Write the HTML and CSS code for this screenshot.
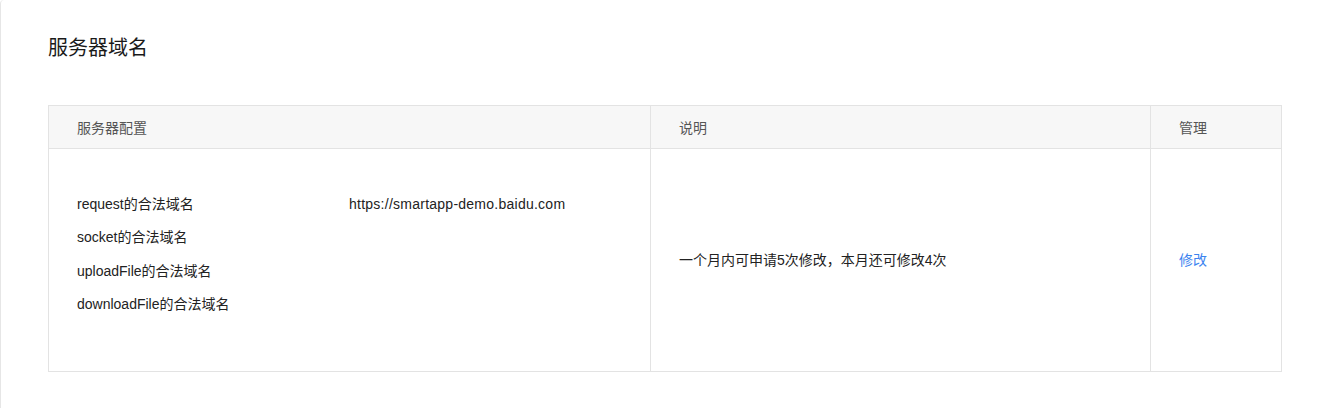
FILE: index.html
```html
<!DOCTYPE html>
<html lang="zh-CN">
<head>
<meta charset="utf-8">
<title>服务器域名</title>
<link rel="stylesheet" href="styles.css">
</head>
<body>
<div class="panel">
  <h1 class="title">服务器域名</h1>
  <table class="domain-table">
    <thead>
      <tr>
        <th class="col-config">服务器配置</th>
        <th class="col-desc">说明</th>
        <th class="col-manage">管理</th>
      </tr>
    </thead>
    <tbody>
      <tr>
        <td class="cell-config">
          <ul class="domain-list">
            <li class="domain-item"><span class="domain-label">request的合法域名</span><span class="domain-value">https://smartapp-demo.baidu.com</span></li>
            <li class="domain-item"><span class="domain-label">socket的合法域名</span><span class="domain-value"></span></li>
            <li class="domain-item"><span class="domain-label">uploadFile的合法域名</span><span class="domain-value"></span></li>
            <li class="domain-item"><span class="domain-label">downloadFile的合法域名</span><span class="domain-value"></span></li>
          </ul>
        </td>
        <td class="cell-desc">一个月内可申请5次修改，本月还可修改4次</td>
        <td class="cell-manage"><a class="link" href="#">修改</a></td>
      </tr>
    </tbody>
  </table>
</div>
</body>
</html>
```

FILE: styles.css
```css
* { box-sizing: border-box; }
html, body {
  margin: 0;
  padding: 0;
  background: #fff;
}
body {
  font-family: "Liberation Sans", Arial, "Noto Sans CJK SC", sans-serif;
  color: #333;
  font-size: 14px;
}
.panel {
  height: 408px;
  border-left: 1px solid #e6e6e6;
  border-top-left-radius: 4px;
  padding: 34px 0 0 47px;
}
.title {
  margin: 0;
  font-size: 20px;
  line-height: 28px;
  font-weight: normal;
  color: #1a1a1a;
}
.domain-table {
  margin-top: 43px;
  width: 1233px;
  border-collapse: collapse;
  table-layout: fixed;
}
.domain-table th,
.domain-table td {
  border: 1px solid #e3e3e3;
  text-align: left;
  padding: 0 0 0 28px;
}
.domain-table th {
  background: #f7f7f7;
  height: 43px;
  font-weight: normal;
  color: #555;
  font-size: 14px;
}
.col-config { width: 602px; }
.col-desc { width: 500px; }
.col-manage { width: 131px; }
.domain-table td {
  vertical-align: middle;
  color: #222;
  height: 223px;
  padding-bottom: 3px;
}
.domain-table td.cell-config {
  padding-top: 4px;
  padding-bottom: 16px;
}
.domain-list {
  list-style: none;
  margin: 0;
  padding: 0;
  display: flex;
  flex-direction: column;
  gap: 13.5px;
}
.domain-item {
  display: flex;
  line-height: 20px;
}
.domain-label {
  width: 272px;
  flex: none;
}
.domain-value {
  letter-spacing: 0.25px;
}
.link {
  color: #3c84f0;
  text-decoration: none;
}
```
